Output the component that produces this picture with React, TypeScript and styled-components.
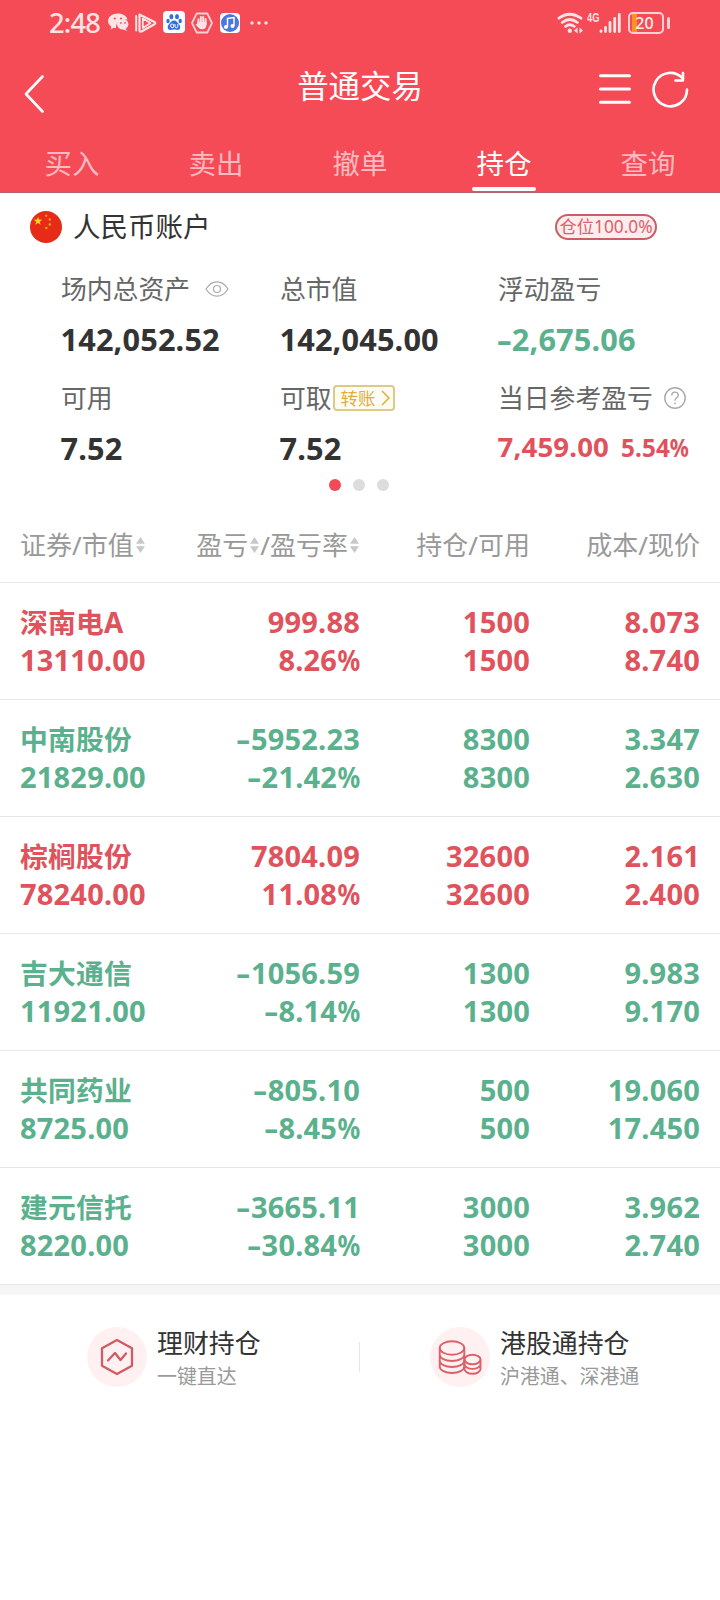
import React from 'react';
import styled, { createGlobalStyle } from 'styled-components';

const RED = '#e0525c';
const GREEN = '#5bb18d';

const GlobalStyle = createGlobalStyle`
  * { box-sizing: border-box; }
  body {
    margin: 0;
    background: #fff;
    font-family: "Noto Sans", "Noto Sans CJK SC", sans-serif;
    color: #333;
  }
  svg { display: block; flex: none; }
`;

const Page = styled.div`
  width: 720px;
  height: 1600px;
  display: flex;
  flex-direction: column;
  background: #fff;
  overflow: hidden;
  white-space: nowrap;
`;

const Header = styled.header`
  height: 193px;
  flex: none;
  display: flex;
  flex-direction: column;
  background: #f54b56;
  color: #fff;
  border-bottom: 1px solid #b5636b;
`;

const StatusBar = styled.div`
  height: 46px;
  display: flex;
  align-items: center;
  justify-content: space-between;
  padding: 0 50px 0 49px;
  color: #ffe3e5;
`;

const StatusLeft = styled.div`
  display: flex;
  align-items: center;
`;

const Clock = styled.span`
  width: 58px;
  font: 500 27.3px/44px "Noto Sans", sans-serif;
  letter-spacing: -0.8px;
  padding-bottom: 1px;
`;

const StatusRight = styled.div`
  display: flex;
  align-items: center;
`;

const Network = styled.span`
  width: 12px;
  margin-left: 4px;
  align-self: flex-start;
  font: 700 12.5px/12px "Liberation Sans", sans-serif;
  transform: scaleX(0.74);
  transform-origin: left;
`;

const Battery = styled.div`
  width: 36px;
  height: 22px;
  margin-left: 7px;
  border: 2px solid #ffd3d6;
  border-radius: 5px;
  padding: 0 3px 1px 0;
  display: flex;
  align-items: center;
  justify-content: center;
  background: linear-gradient(90deg, transparent 2px, #ff9320 2px, #ff9320 7px, transparent 7px);
  font: 500 16px/18px "Noto Sans", sans-serif;
  color: #fff0ea;
`;

const BatteryTip = styled.span`
  width: 3px;
  height: 12px;
  margin-left: 3px;
  border-radius: 2px;
  background: #ffd3d6;
`;

const TitleBar = styled.div`
  height: 86px;
  display: grid;
  grid-template-columns: 1fr auto 1fr;
  align-items: center;
  padding: 0 31px 0 24px;
`;

const Title = styled.h1`
  margin: 0 0 6px 7px;
  font-size: 31.4px;
  line-height: 40px;
  font-weight: 400;
`;

const Actions = styled.div`
  display: flex;
  justify-content: flex-end;
  gap: 21px;
  align-items: center;
`;

const Tabs = styled.nav`
  flex: 1;
  display: grid;
  grid-template-columns: repeat(5, 1fr);
`;

const Tab = styled.button<{ $active?: boolean }>`
  padding: 10px 0 0;
  border: 0;
  background: none;
  font: 400 27.5px/40px "Noto Sans CJK SC", sans-serif;
  color: ${(p) => (p.$active ? '#fff' : '#ffb9c0')};
  display: flex;
  flex-direction: column;
  align-items: center;
  &::after {
    content: "";
    width: 64px;
    height: 4px;
    margin-top: 5px;
    border-radius: 2px;
    background: ${(p) => (p.$active ? '#fff' : 'transparent')};
  }
`;

const AccountRow = styled.div`
  height: 68px;
  flex: none;
  display: flex;
  align-items: center;
  padding: 0 63px 0 30px;
`;

const AccountName = styled.span`
  margin-left: 11px;
  flex: 1;
  font-size: 27.5px;
  line-height: 40px;
`;

const PositionBadge = styled.span`
  width: 102px;
  height: 26px;
  border: 2px solid #c95f62;
  border-radius: 13px;
  background: #ffecee;
  display: flex;
  align-items: center;
  justify-content: center;
  font-size: 17.3px;
  line-height: 22px;
  color: #d9636a;
`;

const Summary = styled.section`
  height: 216px;
  flex: none;
  display: grid;
  grid-template-columns: 219px 218px 1fr;
  grid-template-rows: 109px 1fr;
  padding: 8px 0 0 61px;
`;

const SummaryLabel = styled.div`
  height: 40px;
  display: flex;
  align-items: center;
  font-size: 25.8px;
  line-height: 40px;
  color: #666;
`;

const IconGap = styled.span<{ $w: number }>`
  margin-left: ${(p) => p.$w}px;
`;

const SummaryValue = styled.div<{ $color?: string; $size?: number }>`
  margin-top: ${(p) => (p.$size ? 8 : 10)}px;
  margin-left: -0.5px;
  height: 40px;
  display: flex;
  align-items: baseline;
  font-size: ${(p) => p.$size ?? 30.7}px;
  letter-spacing: 0.15px;
  line-height: 40px;
  font-weight: 700;
  color: ${(p) => p.$color ?? '#333'};
`;

const Percent = styled.span`
  margin-left: 12px;
  font-size: 24.3px;
`;

const Transfer = styled.button`
  width: 62px;
  height: 26px;
  margin-left: 1px;
  padding: 0 2px 0 6px;
  border: 2px solid #dfc986;
  border-radius: 4px;
  background: #fffdf2;
  display: flex;
  align-items: center;
  justify-content: space-between;
  font: 400 17.5px/22px "Noto Sans CJK SC", sans-serif;
  color: #e3ad3e;
`;

const Dots = styled.div`
  height: 16px;
  flex: none;
  display: flex;
  justify-content: center;
  align-items: center;
  gap: 12px;
  padding-right: 2px;
`;

const Dot = styled.i<{ $on?: boolean }>`
  width: 12px;
  height: 12px;
  border-radius: 50%;
  background: ${(p) => (p.$on ? '#f04b57' : '#dcdcdc')};
`;

const Grid = styled.div`
  display: grid;
  grid-template-columns: 150px 190px 170px 170px;
  padding: 0 20px;
  border-bottom: 1px solid #e8e8e8;
  flex: none;
`;

const TableHead = styled(Grid)`
  height: 90px;
  padding-top: 32px;
  font-size: 26px;
  line-height: 40px;
  color: #999;
`;

const HeadCell = styled.div<{ $left?: boolean }>`
  display: flex;
  align-items: center;
  height: 40px;
  justify-content: ${(p) => (p.$left ? 'flex-start' : 'flex-end')};
  svg { margin: 0 1px 0 2px; }
`;

const Holding = styled(Grid)<{ $up: boolean }>`
  height: 117px;
  padding-top: 20px;
  font-size: 29px;
  letter-spacing: 0.2px;
  line-height: 38px;
  font-weight: 700;
  color: ${(p) => (p.$up ? RED : GREEN)};
`;

const Cell = styled.div<{ $left?: boolean }>`
  text-align: ${(p) => (p.$left ? 'left' : 'right')};
  > div { height: 38px; }
`;

const StockName = styled.div`
  font-size: 27.8px;
`;

const Minus = styled.span`
  display: inline-block;
  transform: scaleX(1.5);
  transform-origin: right;
  margin-left: 0.14em;
`;

const PercentSign = styled.span`
  display: inline-block;
  transform: scaleX(0.87);
  transform-origin: right;
  margin-left: -0.12em;
`;

const Divider = styled.div`
  height: 10px;
  flex: none;
  background: #f5f5f5;
`;

const Shortcuts = styled.section`
  height: 124px;
  display: grid;
  grid-template-columns: 359px 1px 360px;
  align-items: center;
`;

const Separator = styled.i`
  height: 30px;
  background: #e6e6e6;
`;

const Shortcut = styled.div<{ $pad: number }>`
  display: flex;
  align-items: center;
  padding-left: ${(p) => p.$pad}px;
`;

const Bubble = styled.span`
  width: 60px;
  height: 60px;
  border-radius: 50%;
  background: #fff1f1;
  flex: none;
`;

const ShortcutText = styled.div`
  margin: 2px 0 0 10px;
`;

const ShortcutTitle = styled.div`
  font-size: 25.9px;
  line-height: 38px;
`;

const ShortcutNote = styled.div`
  font-size: 19.9px;
  line-height: 30px;
  color: #999;
`;

const StatusIcons = () => (
  <svg width="162" height="26" viewBox="107 10 162 26" fill="#ffe3e5">
    <path d="M118 13.500c-5.700 0-10 3.400-10 7.600 0 2.400 1.300 4.400 3.400 5.700l-.8 2.600 3.200-1.600c1.200.4 1.400.3 2.300.3-.6-4.800 3.700-8.700 11.400-8.500-.8-3.600-4.500-6.100-9.500-6.100z" />
    <ellipse cx="122.700" cy="24.300" rx="5.700" ry="5.200" />
    <path d="M125 28l2.300 3-4.800-1.700z" />
    <g fill="#f54b56"><circle cx="114.700" cy="18.500" r="1.100" /><circle cx="121" cy="18.500" r="1.100" /><circle cx="120.900" cy="22.900" r=".9" /><circle cx="125" cy="22.900" r=".9" /></g>
    <g fill="none" stroke="#ffe3e5" strokeLinejoin="round">
      <path d="M139.500 14.500L154.500 22q1.500 1 0 2.200L141.500 31.500q-2 .8-2-1.200z" strokeWidth="2.200" />
      <path d="M142.800 18.500v9.500l7.700-4.900z" strokeWidth="1.800" />
      <path d="M136.200 16v14.500" strokeWidth="2" strokeLinecap="round" />
    </g>
    <rect x="163" y="11" width="22" height="22" rx="4" fill="#fff" />
    <g fill="#2f6fe0">
      <ellipse cx="171.400" cy="16.700" rx="2" ry="2.600" /><ellipse cx="177" cy="16.700" rx="2" ry="2.600" />
      <ellipse cx="168" cy="21" rx="1.700" ry="2.200" /><ellipse cx="180.200" cy="21" rx="1.700" ry="2.200" />
      <path d="M174 20.500c2.500 0 3.300 2 4.800 3.400 2.500 2.400 1.600 6-1.300 6-1.500 0-2.200-.4-3.500-.4s-2 .4-3.500.4c-3 0-3.800-3.600-1.300-6 1.500-1.400 2.300-3.400 4.800-3.400z" />
    </g>
    <path d="M170.500 26q0-2 1.700-2t1.600 2-1.600 1.700-1.700-1.700M175 24v2.600q.3 1.200 1.400 1.200t1.400-1.200V24" fill="none" stroke="#fff" strokeWidth="1" />
    <path d="M192 23l4.700-9.500h10.600L212 23l-4.700 9.500h-10.600z" fill="none" stroke="#ffd0d4" strokeWidth="1.800" strokeLinejoin="round" />
    <path d="M198.400 24.500v-5M200.800 23v-6M203.200 23v-6M205.600 24v-5" stroke="#ffe3e5" strokeWidth="2" strokeLinecap="round" />
    <path d="M197.400 22h9.200v2q0 5-3.600 5.300h-2.200q-2.400-1-5.300-5 .6-1.200 1.900 0z" />
    <rect x="220" y="13" width="20" height="20" rx="4" fill="#fff" />
    <circle cx="230" cy="23" r="9" fill="#4a78dc" />
    <path d="M227.500 27v-8.500l6.500-1V26" fill="none" stroke="#fff" strokeWidth="1.500" />
    <circle cx="226" cy="27" r="2" fill="#fff" /><circle cx="232.500" cy="26" r="2" fill="#fff" />
    <circle cx="252" cy="23" r="1.700" /><circle cx="259" cy="23" r="1.700" /><circle cx="266" cy="23" r="1.700" />
  </svg>
);

const Wifi = () => (
  <svg width="26" height="22" viewBox="0 0 26 22" fill="none" stroke="#ffe3e5" strokeWidth="2.800" strokeLinecap="round">
    <path d="M2 6.200q10.500-8 22 0M5.200 10.500q7.600-6 15.200 0M8.600 14.400q4.200-3.200 8.600 0" />
    <circle cx="12.800" cy="18.800" r="2.200" fill="#ffe3e5" stroke="none" />
    <path d="M20.500 15.500v6l-3.500-3zM22.500 15.500v6l3.500-3z" fill="#ffe3e5" stroke="none" />
  </svg>
);

const Signal = () => (
  <svg width="22" height="22" viewBox="0 0 22 22" stroke="#ffe3e5" strokeWidth="2.800" strokeLinecap="round">
    <path d="M2 19.500v-.7M6.500 19.500v-4M11 19.500V10.500M15.700 19.500V6.300M20.300 19.500V2.300" />
  </svg>
);

const Flag = () => (
  <svg width="32" height="32" viewBox="0 0 32 32">
    <circle cx="16" cy="16" r="16" fill="#e62c16" />
    <path d="M8 5.700l1.100 2.900 3.100.1-2.400 2 .8 3-2.600-1.700-2.600 1.700.8-3-2.400-2 3.100-.1z" fill="#ffd21c" />
    <g fill="#f5a31c"><circle cx="16.200" cy="4.800" r="1.100" /><circle cx="19.800" cy="8.400" r="1.200" /><circle cx="19.800" cy="13.500" r="1.200" /><circle cx="16.300" cy="17" r="1.200" /></g>
  </svg>
);

const Eye = () => (
  <svg width="24" height="16" viewBox="0 0 24 16" fill="none" stroke="#aaa" strokeWidth="1.200">
    <path d="M1 8Q5.500.8 12 .8T23 8q-4.500 7.200-11 7.200T1 8z" /><circle cx="12" cy="8" r="3.500" />
  </svg>
);

const Help = () => (
  <svg width="22" height="22" viewBox="0 0 22 22" fill="none" stroke="#aaa" strokeWidth="1.400">
    <circle cx="11" cy="11" r="10.200" /><path d="M7.700 8.500q.1-3.400 3.300-3.400t3.300 3q0 1.500-1.700 2.700Q11 12 11 13.700M11 15.500v1.700" />
  </svg>
);

const Sort = () => (
  <svg width="9" height="16" viewBox="0 0 9 16" fill="#c8c8c8">
    <path d="M4.500 0L9 6.800H0zM4.500 16L9 9.200H0z" />
  </svg>
);

const figure = (s: string) => {
  const negative = s.startsWith('-');
  const percent = s.endsWith('%');
  return (
    <>
      {negative && <Minus>-</Minus>}
      {s.replace(/[-%]/g, '')}
      {percent && <PercentSign>%</PercentSign>}
    </>
  );
};

const holdings = [
  ['深南电A', '13110.00', '999.88', '8.26%', '1500', '8.073', '8.740'],
  ['中南股份', '21829.00', '-5952.23', '-21.42%', '8300', '3.347', '2.630'],
  ['棕榈股份', '78240.00', '7804.09', '11.08%', '32600', '2.161', '2.400'],
  ['吉大通信', '11921.00', '-1056.59', '-8.14%', '1300', '9.983', '9.170'],
  ['共同药业', '8725.00', '-805.10', '-8.45%', '500', '19.060', '17.450'],
  ['建元信托', '8220.00', '-3665.11', '-30.84%', '3000', '3.962', '2.740'],
];

const BackButton = styled.button`
  padding: 0;
  border: 0;
  background: none;
  justify-self: start;
  margin-top: 10px;
`;

export default function App() {
  return (
    <Page>
      <GlobalStyle />
      <Header>
        <StatusBar>
          <StatusLeft><Clock>2:48</Clock><StatusIcons /></StatusLeft>
          <StatusRight>
            <Wifi /><Network>4G</Network><Signal /><Battery>20</Battery><BatteryTip />
          </StatusRight>
        </StatusBar>
        <TitleBar>
          <BackButton>
            <svg width="21" height="40" viewBox="0 0 21 40" fill="none" stroke="#fff" strokeWidth="2.600" strokeLinecap="round" strokeLinejoin="round">
              <path d="M18.500 2.500L2 20l16.500 17.500" />
            </svg>
          </BackButton>
          <Title>普通交易</Title>
          <Actions>
            <svg width="32" height="32" viewBox="0 0 32 32" stroke="#fff" strokeWidth="3" strokeLinecap="round">
              <path d="M1.500 2.700h29M1.500 16h29M1.500 29.300h29" />
            </svg>
            <svg width="37" height="37" viewBox="0 0 37 37" fill="none" stroke="#fff" strokeWidth="2.600" strokeLinecap="round" strokeLinejoin="round">
              <path d="M35 18.500A16.700 16.700 0 1 1 30.500 7.200M31 2v7.500h-7.500" />
            </svg>
          </Actions>
        </TitleBar>
        <Tabs>
          {['买入', '卖出', '撤单', '持仓', '查询'].map((t) => (
            <Tab key={t} $active={t === '持仓'}>{t}</Tab>
          ))}
        </Tabs>
      </Header>

      <AccountRow>
        <Flag />
        <AccountName>人民币账户</AccountName>
        <PositionBadge>仓位100.0%</PositionBadge>
      </AccountRow>

      <Summary>
        <div>
          <SummaryLabel>场内总资产<IconGap $w={15}><Eye /></IconGap></SummaryLabel>
          <SummaryValue>142,052.52</SummaryValue>
        </div>
        <div>
          <SummaryLabel>总市值</SummaryLabel>
          <SummaryValue>142,045.00</SummaryValue>
        </div>
        <div>
          <SummaryLabel>浮动盈亏</SummaryLabel>
          <SummaryValue $color={GREEN}>{figure('-2,675.06')}</SummaryValue>
        </div>
        <div>
          <SummaryLabel>可用</SummaryLabel>
          <SummaryValue>7.52</SummaryValue>
        </div>
        <div>
          <SummaryLabel>
            可取
            <Transfer>
              转账
              <svg width="11" height="16" viewBox="0 0 11 16" fill="none" stroke="#e3ad3e" strokeWidth="1.500"><path d="M2 1l7 7-7 7" /></svg>
            </Transfer>
          </SummaryLabel>
          <SummaryValue>7.52</SummaryValue>
        </div>
        <div>
          <SummaryLabel>当日参考盈亏<IconGap $w={11}><Help /></IconGap></SummaryLabel>
          <SummaryValue $color={RED} $size={27.6}>7,459.00<Percent>{figure('5.54%')}</Percent></SummaryValue>
        </div>
      </Summary>
      <Dots><Dot $on /><Dot /><Dot /></Dots>

      <TableHead>
        <HeadCell $left>证券/市值<Sort /></HeadCell>
        <HeadCell>盈亏<Sort />/盈亏率<Sort /></HeadCell>
        <HeadCell>持仓/可用</HeadCell>
        <HeadCell>成本/现价</HeadCell>
      </TableHead>
      {holdings.map(([name, value, profit, rate, qty, cost, price]) => (
        <Holding key={name} $up={!profit.startsWith('-')}>
          <Cell $left><StockName>{name}</StockName><div>{value}</div></Cell>
          <Cell><div>{figure(profit)}</div><div>{figure(rate)}</div></Cell>
          <Cell><div>{qty}</div><div>{qty}</div></Cell>
          <Cell><div>{cost}</div><div>{price}</div></Cell>
        </Holding>
      ))}
      <Divider />

      <Shortcuts>
        <Shortcut $pad={87}>
          <Bubble>
            <svg width="60" height="60" viewBox="0 0 60 60" fill="none" stroke="#d35a62" strokeWidth="2.300" strokeLinecap="round" strokeLinejoin="round">
              <path d="M30 13l15 8.300v17.400L30 47l-15-8.300V21.300z" /><path d="M21 33.500l7-7.500 5.500 7L39 26.500" />
            </svg>
          </Bubble>
          <ShortcutText><ShortcutTitle>理财持仓</ShortcutTitle><ShortcutNote>一键直达</ShortcutNote></ShortcutText>
        </Shortcut>
        <Separator />
        <Shortcut $pad={70}>
          <Bubble>
            <svg width="60" height="60" viewBox="0 0 60 60" fill="none" stroke="#dc6068" strokeWidth="1.900">
              <ellipse cx="22" cy="21" rx="12.300" ry="6.700" />
              <path d="M9.700 21v18.500c0 3.700 5.500 6.500 12.300 6.500s12.300-2.800 12.300-6.500V21M9.700 27.500c0 3.700 5.500 6.500 12.300 6.500s12.300-2.800 12.300-6.500M9.700 33.500c0 3.700 5.500 6.500 12.300 6.500s12.300-2.800 12.300-6.500" />
              <ellipse cx="42.500" cy="32.500" rx="8" ry="4.700" />
              <path d="M34.500 32.500V42c0 2.600 3.600 4.700 8 4.700s8-2.100 8-4.700v-9.500M34.500 37.200c0 2.600 3.600 4.700 8 4.700s8-2.100 8-4.700" />
            </svg>
          </Bubble>
          <ShortcutText><ShortcutTitle>港股通持仓</ShortcutTitle><ShortcutNote>沪港通、深港通</ShortcutNote></ShortcutText>
        </Shortcut>
      </Shortcuts>
    </Page>
  );
}
